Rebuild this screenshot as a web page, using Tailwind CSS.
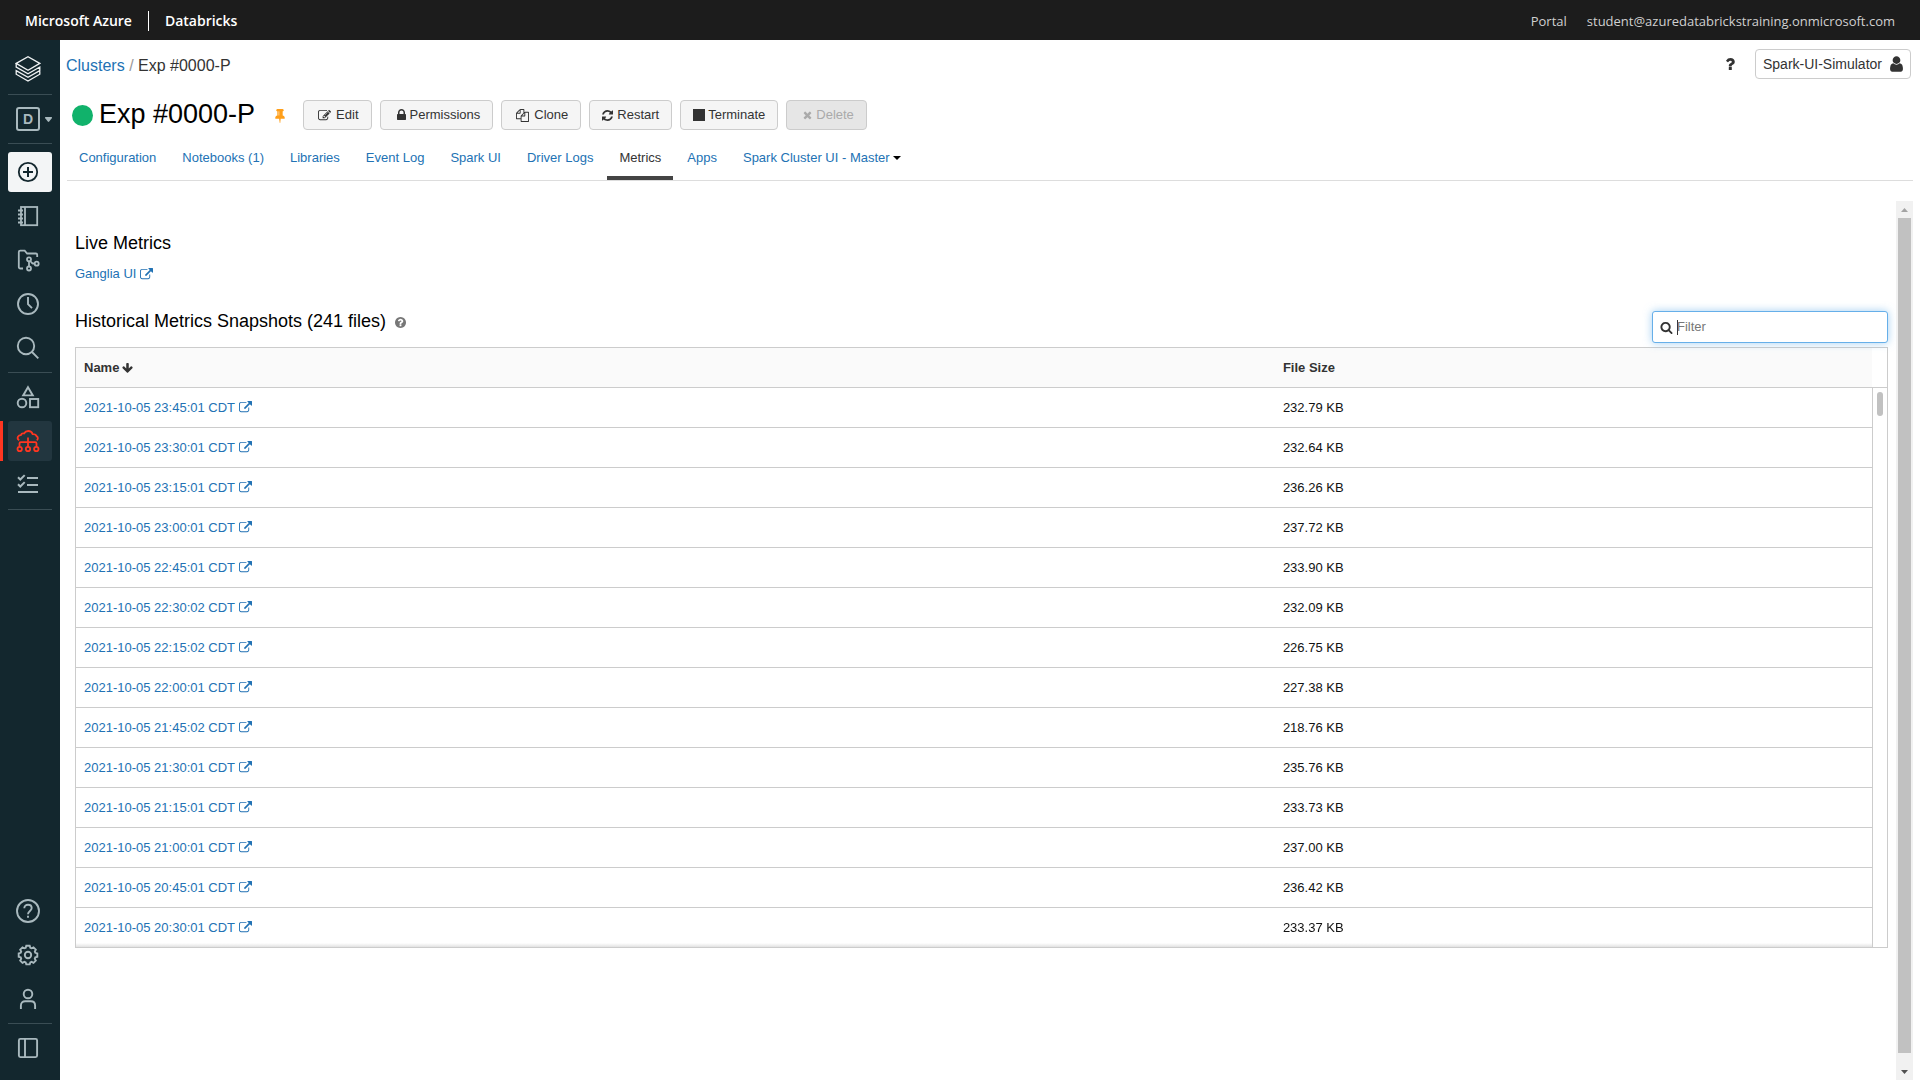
<!DOCTYPE html>
<html lang="en">
<head>
  <meta charset="UTF-8" />
  <meta name="viewport" content="width=device-width, initial-scale=1.0" />
  <title>Exp #0000-P - Databricks</title>
  <!-- Tailwind CSS -->
  <script src="https://cdn.jsdelivr.net/npm/@tailwindcss/browser@4"></script>
</head>
<body class="h-screen flex flex-col overflow-hidden bg-white font-['Liberation_Sans',Arial,sans-serif] text-[13px] leading-5 text-[#333]">
  <!-- Icon sprite -->
  <svg class="hidden" xmlns="http://www.w3.org/2000/svg">
    <symbol id="i-external" viewBox="0 0 1792 1792"><path d="M1408 928v320q0 119-84.5 203.5t-203.5 84.5h-832q-119 0-203.5-84.5t-84.5-203.5v-832q0-119 84.5-203.5t203.5-84.5h704q14 0 23 9t9 23v64q0 14-9 23t-23 9h-704q-66 0-113 47t-47 113v832q0 66 47 113t113 47h832q66 0 113-47t47-113v-320q0-14 9-23t23-9h64q14 0 23 9t9 23zm384-864v512q0 26-19 45t-45 19-45-19l-176-176-652 652q-10 10-23 10t-23-10l-114-114q-10-10-10-23t10-23l652-652-176-176q-19-19-19-45t19-45 45-19h512q26 0 45 19t19 45z"/></symbol>
    <symbol id="i-edit" viewBox="0 0 1792 1792"><path d="M888 1184l116-116-152-152-116 116v56h96v96h56zm440-720q-16-16-33 1l-350 350q-17 17-1 33t33-1l350-350q17-17 1-33zm80 594v190q0 119-84.5 203.5t-203.5 84.5h-832q-119 0-203.5-84.5t-84.5-203.5v-832q0-119 84.5-203.5t203.5-84.5h832q63 0 117 25 15 7 18 23 3 17-9 29l-49 49q-14 14-32 8-23-6-45-6h-832q-66 0-113 47t-47 113v832q0 66 47 113t113 47h832q66 0 113-47t47-113v-126q0-13 9-22l64-64q15-15 35-7t20 29zm-96-738l288 288-672 672h-288v-288zm444 132l-92 92-288-288 92-92q28-28 68-28t68 28l152 152q28 28 28 68t-28 68z"/></symbol>
    <symbol id="i-lock" viewBox="320 0 1152 1792"><path d="M640 768h512v-192q0-106-75-181t-181-75-181 75-75 181v192zm832 96v576q0 40-28 68t-68 28h-960q-40 0-68-28t-28-68v-576q0-40 28-68t68-28h32v-192q0-184 132-316t316-132 316 132 132 316v192h32q40 0 68 28t28 68z"/></symbol>
    <symbol id="i-clone" viewBox="0 0 1792 1792"><path d="M1696 384q40 0 68 28t28 68v1216q0 40-28 68t-68 28h-960q-40 0-68-28t-28-68v-288h-544q-40 0-68-28t-28-68v-672q0-40 20-88t48-76l408-408q28-28 76-48t88-20h416q40 0 68 28t28 68v328q68-40 128-40h416zm-544 213l-299 299h299v-299zm-640-384l-299 299h299v-299zm196 647l316-316v-416h-384v416q0 40-28 68t-68 28h-416v640h512v-256q0-40 20-88t48-76zm956 804v-1152h-384v416q0 40-28 68t-68 28h-416v640h896z"/></symbol>
    <symbol id="i-refresh" viewBox="128 0 1536 1792"><path d="M1639 1056q0 5-1 7-64 268-268 434.5t-478 166.5q-146 0-282.5-55t-243.5-157l-129 129q-19 19-45 19t-45-19-19-45v-448q0-26 19-45t45-19h448q26 0 45 19t19 45-19 45l-137 137q71 66 161 102t187 36q134 0 250-65t186-179q11-17 53-117 8-23 30-23h192q13 0 22.5 9.5t9.5 22.5zm25-800v448q0 26-19 45t-45 19h-448q-26 0-45-19t-19-45 19-45l138-138q-148-137-349-137-134 0-250 65t-186 179q-11 17-53 117-8 23-30 23h-199q-13 0-22.5-9.5t-9.5-22.5v-7q65-268 270-434.5t480-166.5q146 0 284 55.5t245 156.5l130-129q19-19 45-19t45 19 19 45z"/></symbol>
    <symbol id="i-times" viewBox="192 0 1408 1792"><path d="M1490 1322q0 40-28 68l-136 136q-28 28-68 28t-68-28l-294-294-294 294q-28 28-68 28t-68-28l-136-136q-28-28-28-68t28-68l294-294-294-294q-28-28-28-68t28-68l136-136q28-28 68-28t68 28l294 294 294-294q28-28 68-28t68 28l136 136q28 28 28 68t-28 68l-294 294 294 294q28 28 28 68z"/></symbol>
    <symbol id="i-search" viewBox="0 0 1792 1792"><path d="M1216 832q0-185-131.5-316.5t-316.5-131.5-316.5 131.5-131.5 316.5 131.5 316.5 316.5 131.5 316.5-131.5 131.5-316.5zm512 832q0 52-38 90t-90 38q-54 0-90-38l-343-342q-179 124-399 124-143 0-273.5-55.5t-225-150-150-225-55.5-273.5 55.5-273.5 150-225 225-150 273.5-55.5 273.5 55.5 225 150 150 225 55.5 273.5q0 220-124 399l343 343q37 37 37 90z"/></symbol>
    <symbol id="i-user" viewBox="256 0 1280 1792"><path d="M1536 1399q0 109-62.5 187t-150.5 78h-854q-88 0-150.5-78t-62.5-187q0-85 8.5-160.5t31.5-152 58.5-131 94-89 134.5-34.5q131 128 313 128t313-128q76 0 134.5 34.5t94 89 58.5 131 31.5 152 8.5 160.5zm-256-887q0 159-112.5 271.5t-271.5 112.5-271.5-112.5-112.5-271.5 112.5-271.5 271.5-112.5 271.5 112.5 112.5 271.5z"/></symbol>
    <symbol id="i-pin" viewBox="320 0 1152 1792"><path d="M800 864v-448q0-14-9-23t-23-9-23 9-9 23v448q0 14 9 23t23 9 23-9 9-23zm672 352q0 26-19 45t-45 19h-429l-51 483q-2 12-10.5 20.5t-20.5 8.5h-1q-27 0-32-27l-76-485h-404q-26 0-45-19t-19-45q0-123 78.5-221.5t177.5-98.5v-512q-52 0-90-38t-38-90 38-90 90-38h640q52 0 90 38t38 90-38 90-90 38v512q99 0 177.5 98.5t78.5 221.5z"/></symbol>
    <symbol id="i-help" viewBox="128 128 1536 1536"><path d="M1024 1376v-192q0-14-9-23t-23-9h-192q-14 0-23 9t-9 23v192q0 14 9 23t23 9h192q14 0 23-9t9-23zm256-672q0-88-55.5-163t-138.5-116-170-41q-243 0-371 213-15 24 8 42l132 100q7 6 19 6 16 0 25-12 53-68 86-92 34-24 86-24 48 0 85.5 26t37.5 59q0 38-20 61t-68 45q-63 28-115.5 86.5t-52.5 125.5v36q0 14 9 23t23 9h192q14 0 23-9t9-23q0-19 21.5-49.5t54.5-49.5q32-18 49-28.5t46-35 44.5-48 28-60.5 12.5-81zm384 192q0 209-103 385.5t-279.5 279.5-385.5 103-385.5-103-279.5-279.5-103-385.5 103-385.5 279.5-279.5 385.5-103 385.5 103 279.5 279.5 103 385.5z"/></symbol>
    <symbol id="i-question" viewBox="384 256 1024 1280"><path d="M1088 1256v240q0 16-12 28t-28 12h-240q-16 0-28-12t-12-28v-240q0-16 12-28t28-12h240q16 0 28 12t12 28zm316-600q0 54-15.5 101t-35 76.5-55 59.5-57.5 43.5-61 35.5q-41 23-68.5 65t-27.5 67q0 17-12 32.5t-28 15.5h-240q-15 0-25.5-18.5t-10.5-37.5v-45q0-83 65-156.5t143-108.5q59-27 84-56t25-76q0-42-46.5-74t-107.5-32q-65 0-108 29-35 25-107 115-13 16-31 16-12 0-25-8l-164-125q-13-10-15.5-25t5.5-28q160-266 464-266 80 0 161 31t146 83 106 127.5 41 158.5z"/></symbol>
    <symbol id="i-arrow-down" viewBox="64 0 1664 1792"><path d="M1675 832q0 53-37 90l-651 652q-39 37-91 37-53 0-90-37l-651-652q-38-36-38-90 0-53 38-91l74-75q39-37 91-37 53 0 90 37l294 294v-704q0-52 38-90t90-38h128q52 0 90 38t38 90v704l294-294q37-37 90-37 52 0 91 37l75 75q37 39 37 91z"/></symbol>
  </svg>

  <!-- Azure bar -->
  <header class="h-10 shrink-0 flex items-center justify-between px-[25px] pt-px bg-[#1c1c1c] font-['Open_Sans','Noto_Sans',sans-serif]">
    <div class="flex items-center gap-4 text-sm font-semibold text-white">
      <a href="#">Microsoft Azure</a>
      <span class="w-px h-5 bg-white"></span>
      <a href="#">Databricks</a>
    </div>
    <div class="flex items-center gap-5 text-[13px] text-[#d0d0d0]">
      <a href="#">Portal</a>
      <a href="#">student@azuredatabrickstraining.onmicrosoft.com</a>
    </div>
  </header>

  <div class="flex-1 min-h-0 flex">
    <!-- Sidebar -->
    <nav aria-label="Workspace" class="w-[60px] shrink-0 flex flex-col px-2 pt-2 pb-3 bg-[#13272e] text-[#a9b9be]">
      <a href="#" aria-label="Databricks" class="h-[42px] shrink-0 flex items-center justify-center pr-1 text-[#f0f3f4]">
        <svg class="size-[26px]" viewBox="0 0 26 26" fill="none" stroke="currentColor" stroke-width="1.3">
          <path d="M1.2 7.4 13 .8l11.8 6.600L13 14.200z"/>
          <path d="M1.200 7.400v3.600L13 17.700l11.800-6.700v3.600L13 21.300 1.200 14.600v3.600L13 25l11.800-6.800v-3.600"/>
        </svg>
      </a>
      <hr class="mt-1 border-[#3a4d54]" />
      <button type="button" aria-label="Persona" class="h-12 shrink-0 flex items-center gap-[5px] pl-2">
        <span class="size-6 shrink-0 flex items-center justify-center rounded-[3px] border-2 border-current text-sm font-bold">D</span>
        <svg class="w-[7px] h-[5px] shrink-0" viewBox="0 0 7 5" fill="currentColor"><path d="M.5 0h6q.8.500.3 1.200L4.200 4.600q-.7.600-1.400 0L.2 1.200Q-.3.500.5 0z"/></svg>
      </button>
      <hr class="border-[#3a4d54]" />

      <div class="flex flex-col gap-1 py-1 mt-1">
        <a href="#" aria-label="Create" class="h-10 flex items-center justify-center pr-1 rounded-[3px] bg-[#f3f5f6] text-[#13272e]">
          <svg class="size-6" viewBox="0 0 24 24" fill="none" stroke="currentColor" stroke-width="1.8"><circle cx="12" cy="12" r="9.2"/><path d="M12 7v10M7 12h10" stroke-width="2"/></svg>
        </a>
        <a href="#" aria-label="Workspace" class="h-10 flex items-center justify-center pr-1">
          <svg class="size-6" viewBox="0 0 24 24" fill="none" stroke="currentColor" stroke-width="1.8"><rect x="5" y="3" width="16.200" height="18.200"/><path d="M9 3v18M2 6.500h5M2 10.500h5M2 14.500h5M2 18.500h5"/></svg>
        </a>
        <a href="#" aria-label="Repos" class="h-10 flex items-center justify-center pr-1">
          <svg class="size-6" viewBox="0 0 24 24" fill="none" stroke="currentColor" stroke-width="1.8"><path d="M7 20.500H4.300c-.8 0-1.500-.7-1.500-1.500V4c0-.8.7-1.300 1.500-1.300h4.400l2.400 2.800h8.800c.8 0 1.300.5 1.300 1.300V9"/><circle cx="13" cy="11.300" r="2"/><circle cx="13" cy="20.500" r="2"/><circle cx="20.700" cy="15.700" r="2"/><path d="M13 13.300v5.200M14.200 13l1.800 2c.5.500 1 .7 2.600.7"/></svg>
        </a>
        <a href="#" aria-label="Recents" class="h-10 flex items-center justify-center pr-1">
          <svg class="size-6" viewBox="0 0 24 24" fill="none" stroke="currentColor" stroke-width="1.9"><circle cx="12" cy="12" r="10"/><path d="M12 5v7.200l4 4"/></svg>
        </a>
        <a href="#" aria-label="Search" class="h-10 flex items-center justify-center pr-1">
          <svg class="size-6" viewBox="0 0 24 24" fill="none" stroke="currentColor" stroke-width="1.9"><circle cx="10" cy="10" r="8.200"/><path d="m16 16 6.300 6.300"/></svg>
        </a>
      </div>
      <hr class="border-[#3a4d54]" />
      <div class="flex flex-col gap-1 py-1">
        <a href="#" aria-label="Data" class="h-10 flex items-center justify-center pr-1">
          <svg class="size-6" viewBox="0 0 24 24" fill="none" stroke="currentColor" stroke-width="1.9"><path d="m12 2.200 4.800 8.200H7.200z"/><circle cx="6" cy="18" r="4.300"/><rect x="14" y="14" width="8.200" height="8.200"/></svg>
        </a>
        <a href="#" aria-label="Compute" class="relative h-10 flex items-center justify-center pr-1 rounded-[3px] bg-[#22363f] text-[#ff3621]">
          <span class="absolute -left-2 inset-y-0 w-[3px] bg-[#ff3621]"></span>
          <svg class="size-6" viewBox="0 0 24 24" fill="none" stroke="currentColor" stroke-width="1.8"><path d="M3.200 11.200C1.700 10.400 1.400 8.900 2 7.700c.6-1 1.500-1.500 2.800-1.600.6-1.500 1.900-2 3.200-1.600 1-1.700 2.500-2.500 4.200-2.500 2.200 0 3.800 1.200 4.400 3.100 2.300-.1 3.500.7 3.900 2 1.700.8 1.900 3.100.2 4.100M12 8.500v9.300M3.500 17.800v-3.300c0-.9.400-1.300 1.300-1.300h14.400c.9 0 1.300.4 1.300 1.300v3.300"/><circle cx="3.700" cy="20" r="2.200"/><circle cx="12" cy="20" r="2.200"/><circle cx="20.300" cy="20" r="2.200"/></svg>
        </a>
        <a href="#" aria-label="Jobs" class="h-10 flex items-center justify-center pr-1">
          <svg class="size-6" viewBox="0 0 24 24" fill="none" stroke="currentColor" stroke-width="2"><path d="m2 4.200 2.300 2.300 4.400-4.400M2 11.200l2.300 2.300 4.400-4.400M11 5h11M11 12h11M2 19h20"/></svg>
        </a>
      </div>
      <hr class="border-[#3a4d54]" />

      <div class="flex flex-col gap-1 py-1 mt-auto">
        <a href="#" aria-label="Help" class="h-10 flex items-center justify-center pr-1">
          <svg class="size-6" viewBox="0 0 24 24" fill="none" stroke="currentColor" stroke-width="1.9"><circle cx="12" cy="12" r="11"/><path d="M8.300 9.300c0-2.200 1.600-3.600 3.700-3.600s3.700 1.400 3.700 3.400c0 2.800-3.700 2.900-3.700 6.100M12 16.800v2"/></svg>
        </a>
        <a href="#" aria-label="Settings" class="h-10 flex items-center justify-center pr-1">
          <svg class="size-6" viewBox="0 0 24 24" fill="none" stroke="currentColor" stroke-width="1.9"><circle cx="12" cy="12" r="3.200"/><path d="M10.300 2.800h3.400l.6 2 1.300.5 1.900-1 2.300 2.300-1 1.900.5 1.300 2 .6v3.400l-2 .6-.5 1.300 1 1.900-2.300 2.300-1.900-1-1.300.5-.6 2h-3.400l-.6-2-1.300-.5-1.900 1-2.300-2.300 1-1.900-.5-1.300-2-.6v-3.400l2-.6.5-1.300-1-1.900 2.300-2.300 1.900 1 1.300-.5z"/></svg>
        </a>
        <a href="#" aria-label="Account" class="h-10 flex items-center justify-center pr-1">
          <svg class="size-6" viewBox="0 0 24 24" fill="none" stroke="currentColor" stroke-width="1.900"><circle cx="12" cy="7" r="4.300"/><path d="M4.900 22v-3.500c0-2.600 1.700-4.300 4.300-4.300h5.600c2.600 0 4.300 1.700 4.300 4.300V22"/></svg>
        </a>
      </div>
      <hr class="border-[#3a4d54]" />
      <a href="#" aria-label="Toggle sidebar" class="h-10 mt-1 flex items-center justify-center pr-1">
        <svg class="size-6" viewBox="0 0 24 24" fill="none" stroke="currentColor" stroke-width="1.900"><rect x="2.900" y="2.900" width="18.200" height="18.200" rx="1.500"/><path d="M9 3v18"/></svg>
      </a>
    </nav>

    <!-- Main -->
    <main class="flex-1 min-w-0 flex flex-col">
      <div class="flex items-center justify-between pt-[9px] pl-1.5 pr-[9px]">
        <div class="pt-[3px] text-base text-[#333]">
          <a href="#" class="text-[#2272b4]">Clusters</a> <span class="text-[#999]">/</span> Exp #0000-P
        </div>
        <div class="flex items-center gap-5">
          <button type="button" aria-label="Help"><svg class="w-[10px] h-3" fill="currentColor"><use href="#i-question"/></svg></button>
          <button type="button" class="h-[30px] flex items-center gap-2 px-[7px] border border-[#ccc] rounded text-sm">
            Spark-UI-Simulator
            <svg class="w-[13px] h-[18px]" fill="currentColor"><use href="#i-user"/></svg>
          </button>
        </div>
      </div>

      <div class="flex items-center mt-[21px] pl-3">
        <span class="size-[21px] rounded-full bg-[#11b26b]"></span>
        <h1 class="ml-1.5 pb-0.5 text-[27px] leading-7 text-black">Exp #0000-P</h1>
        <svg class="w-[10px] h-[15px] ml-5 text-[#ff9f1a]" fill="currentColor"><use href="#i-pin"/></svg>
        <div class="flex gap-2 ml-[18px]">
          <button type="button" class="h-[30px] flex items-center gap-[5px] pl-[14px] pr-3 rounded border border-[#ccc] bg-[#f5f5f5]"><svg class="size-[13px]" fill="currentColor"><use href="#i-edit"/></svg>Edit</button>
          <button type="button" class="h-[30px] flex items-center gap-1 pl-4 pr-3 rounded border border-[#ccc] bg-[#f5f5f5]"><svg class="w-[9px] h-[14px]" fill="currentColor"><use href="#i-lock"/></svg>Permissions</button>
          <button type="button" class="h-[30px] flex items-center gap-[5px] pl-[14px] pr-3 rounded border border-[#ccc] bg-[#f5f5f5]"><svg class="size-[13px]" fill="currentColor"><use href="#i-clone"/></svg>Clone</button>
          <button type="button" class="h-[30px] flex items-center gap-1 px-3 rounded border border-[#ccc] bg-[#f5f5f5]"><svg class="w-[11px] h-[13px]" fill="currentColor"><use href="#i-refresh"/></svg>Restart</button>
          <button type="button" class="h-[30px] flex items-center gap-[3px] px-3 rounded border border-[#ccc] bg-[#f5f5f5]"><span class="size-3 bg-[#333]"></span>Terminate</button>
          <button type="button" disabled class="h-[30px] flex items-center gap-1 pl-4 pr-3 rounded border border-[#ccc] bg-[#e6e6e6] text-[#aaa]"><svg class="w-[9px] h-3" fill="currentColor"><use href="#i-times"/></svg>Delete</button>
        </div>
      </div>

      <nav aria-label="Cluster" class="flex gap-0.5 mt-2 mx-[7px] border-b border-[#ddd] text-[#2272b4]">
        <a href="#" class="px-3 pt-[10px] pb-2 border-b-4 border-transparent">Configuration</a>
        <a href="#" class="px-3 pt-[10px] pb-2 border-b-4 border-transparent">Notebooks (1)</a>
        <a href="#" class="px-3 pt-[10px] pb-2 border-b-4 border-transparent">Libraries</a>
        <a href="#" class="px-3 pt-[10px] pb-2 border-b-4 border-transparent">Event Log</a>
        <a href="#" class="px-3 pt-[10px] pb-2 border-b-4 border-transparent">Spark UI</a>
        <a href="#" class="px-3 pt-[10px] pb-2 border-b-4 border-transparent">Driver Logs</a>
        <a href="#" aria-current="page" class="px-3 pt-[10px] pb-2 border-b-4 border-[#444] text-[#333]">Metrics</a>
        <a href="#" class="px-3 pt-[10px] pb-2 border-b-4 border-transparent">Apps</a>
        <a href="#" class="flex items-center gap-[3px] px-3 pt-[10px] pb-2 border-b-4 border-transparent">Spark Cluster UI - Master
          <svg class="w-2 h-1 text-black" viewBox="0 0 8 4" fill="currentColor"><path d="M0 0h8L4 4z"/></svg>
        </a>
      </nav>

      <div class="flex-1 min-h-0 flex mt-5 mr-[7px]">
        <div class="flex-1 min-w-0 pt-[30px] pl-[15px] pr-2">
          <h2 class="text-lg leading-6 text-black">Live Metrics</h2>
          <a href="#" class="mt-[9px] inline-flex items-center gap-1 text-[#2272b4]">Ganglia UI<svg class="size-[13px]" fill="currentColor"><use href="#i-external"/></svg></a>

          <div class="flex items-start justify-between mt-[25px]">
            <div class="flex items-center gap-[9px]">
              <h2 class="text-lg leading-6 text-black">Historical Metrics Snapshots (241 files)</h2>
              <svg class="size-[11px] mt-0.5 text-[#777]" fill="currentColor"><use href="#i-help"/></svg>
            </div>
            <label class="group w-[236px] h-8 mt-0.5 flex items-center px-[7px] bg-white border border-[#66afe9] rounded-[3px] shadow-[0_0_8px_rgba(102,175,233,0.6)]">
              <svg class="size-[13px] shrink-0 mr-1" fill="currentColor"><use href="#i-search"/></svg>
              <!-- Steady caret while the box is empty -->
              <span class="w-px h-[15px] -mr-px bg-[#333] group-has-[input:not(:placeholder-shown)]:hidden"></span>
              <input id="filter" type="text" aria-label="Filter" placeholder="Filter" autofocus class="flex-1 min-w-0 outline-none placeholder:text-[#777] placeholder-shown:caret-transparent" />
            </label>
          </div>

          <table class="w-full mt-1 table-fixed border border-[#ccc] border-separate border-spacing-0">
            <thead>
              <tr class="h-10 text-left">
                <th class="w-[66.2%] px-2 bg-[#fafafa] border-b border-[#ccc]"><span class="flex items-center gap-[3px]">Name<svg class="w-[11px] h-3" fill="currentColor"><use href="#i-arrow-down"/></svg></span></th>
                <th class="px-2 bg-[#fafafa] border-b border-[#ccc]">File Size</th>
                <td class="w-[15px] border-b border-[#ccc]"></td>
              </tr>
            </thead>
            <tbody id="snapshots"></tbody>
          </table>
        </div>

        <!-- Page scrollbar -->
        <div class="w-[17px] flex flex-col items-center bg-[#f1f1f1]">
          <svg class="w-[17px] h-[17px]" viewBox="0 0 17 17" fill="#a3a3a3"><path d="M5 11h7L8.500 7z"/></svg>
          <div class="w-[13px] flex-1 bg-[#c1c1c1]"></div>
          <svg class="w-[17px] h-[17px] mt-[10px]" viewBox="0 0 17 17" fill="#505050"><path d="M5 7h7l-3.500 4z"/></svg>
        </div>
      </div>
    </main>
  </div>

  <script>
    const snapshots = [
      ['2021-10-05 23:45:01 CDT', '232.79 KB'],
      ['2021-10-05 23:30:01 CDT', '232.64 KB'],
      ['2021-10-05 23:15:01 CDT', '236.26 KB'],
      ['2021-10-05 23:00:01 CDT', '237.72 KB'],
      ['2021-10-05 22:45:01 CDT', '233.90 KB'],
      ['2021-10-05 22:30:02 CDT', '232.09 KB'],
      ['2021-10-05 22:15:02 CDT', '226.75 KB'],
      ['2021-10-05 22:00:01 CDT', '227.38 KB'],
      ['2021-10-05 21:45:02 CDT', '218.76 KB'],
      ['2021-10-05 21:30:01 CDT', '235.76 KB'],
      ['2021-10-05 21:15:01 CDT', '233.73 KB'],
      ['2021-10-05 21:00:01 CDT', '237.00 KB'],
      ['2021-10-05 20:45:01 CDT', '236.42 KB'],
      ['2021-10-05 20:30:01 CDT', '233.37 KB'],
    ];

    // The last column is the scroll gutter, one cell over all rows
    function renderRows(items) {
      document.getElementById('snapshots').innerHTML = items.map(([name, size], i) => {
        const last = i === items.length - 1;
        const cell = last
          ? 'h-[39px] px-2 bg-linear-to-t from-[#e2e2e2] to-transparent to-[4px]'
          : 'h-10 px-2 border-b border-[#ccc]';
        const gutter = i === 0
          ? `<td rowspan="${items.length}" class="align-top border-l border-[#ccc]"><div class="w-1.5 h-6 mx-auto mt-1 rounded-full bg-[#c1c1c1]"></div></td>`
          : '';
        return `
        <tr class="text-[#111]">
          <td class="${cell}"><a href="#" class="inline-flex items-center gap-1 text-[#2272b4]">${name}<svg class="size-[13px]" fill="currentColor"><use href="#i-external"/></svg></a></td>
          <td class="${cell}">${size}</td>
          ${gutter}
        </tr>`;
      }).join('');
    }

    document.getElementById('filter').addEventListener('input', e => {
      renderRows(snapshots.filter(([name]) => name.includes(e.target.value)));
    });

    renderRows(snapshots);
  </script>
</body>
</html>
